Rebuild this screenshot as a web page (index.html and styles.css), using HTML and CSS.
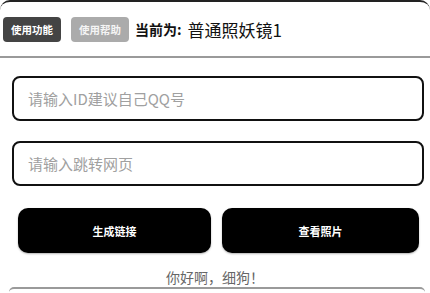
FILE: index.html
```html
<!DOCTYPE html>
<html lang="zh">
<head>
<meta charset="utf-8">
<link rel="stylesheet" href="styles.css">
</head>
<body>
<div class="header">
  <span class="tab tab-active">使用功能</span>
  <span class="tab tab-muted">使用帮助</span>
  <span class="cur-label">当前为:</span>
  <span class="cur-value">普通照妖镜1</span>
</div>
<div class="form">
  <div class="field"><input class="input" type="text" placeholder="请输入ID建议自己QQ号"></div>
  <div class="field"><input class="input" type="text" placeholder="请输入跳转网页"></div>
</div>
<div class="actions">
  <button class="btn">生成链接</button>
  <button class="btn">查看照片</button>
</div>
<div class="greet">你好啊，细狗！</div>
<div class="panel"></div>
</body>
</html>
```
FILE: styles.css
```css
html, body {
  margin: 0;
  padding: 0;
  background: #fff;
  font-family: "Noto Sans CJK SC", "Noto Sans", sans-serif;
  overflow: hidden;
}
.header {
  height: 54px;
  border-top: 2px solid #222;
  border-bottom: 2px solid #9a9a9a;
  border-radius: 10px 10px 0 0;
  display: flex;
  align-items: center;
  padding-left: 3px;
}
.tab {
  display: inline-flex;
  align-items: center;
  justify-content: center;
  width: 58px;
  height: 25px;
  border-radius: 4px;
  color: #fff;
  font-size: 10.5px;
  font-weight: bold;
}
.tab-active { background: #444; }
.tab-muted { background: #ababab; margin-left: 10px; color: #f4f4f4; }
.cur-label {
  margin-left: 6px;
  font-size: 14px;
  font-weight: bold;
  color: #111;
}
.cur-value {
  margin-left: 6px;
  font-size: 17px;
  color: #111;
}
.form {
  padding: 18px 6px 0 12px;
  display: flex;
  flex-direction: column;
  gap: 20px;
}
.input {
  box-sizing: border-box;
  width: 100%;
  height: 45px;
  border: 2px solid #111;
  border-radius: 8px;
  padding: 0 0 0 14px;
  font-family: inherit;
  font-size: 15px;
  outline: none;
  background: #fff;
  display: block;
}
.input::placeholder { color: #a0a0a0; }
.actions {
  display: grid;
  grid-template-columns: 193px 197px;
  column-gap: 11px;
  padding: 22px 0 0 18px;
}
.btn {
  height: 45px;
  background: #000;
  color: #fff;
  border: none;
  border-radius: 10px;
  font-family: inherit;
  font-size: 11px;
  font-weight: bold;
  box-shadow: 0 1px 2px rgba(0,0,0,0.3);
}
.greet {
  margin-top: 14px;
  text-align: center;
  font-size: 14px;
  line-height: 20px;
  color: #666;
}
.panel {
  margin: 0 5px 0 9px;
  height: 3px;
  border-top: 2px solid #9a9a9a;
  border-radius: 14px 14px 0 0;
}
```
